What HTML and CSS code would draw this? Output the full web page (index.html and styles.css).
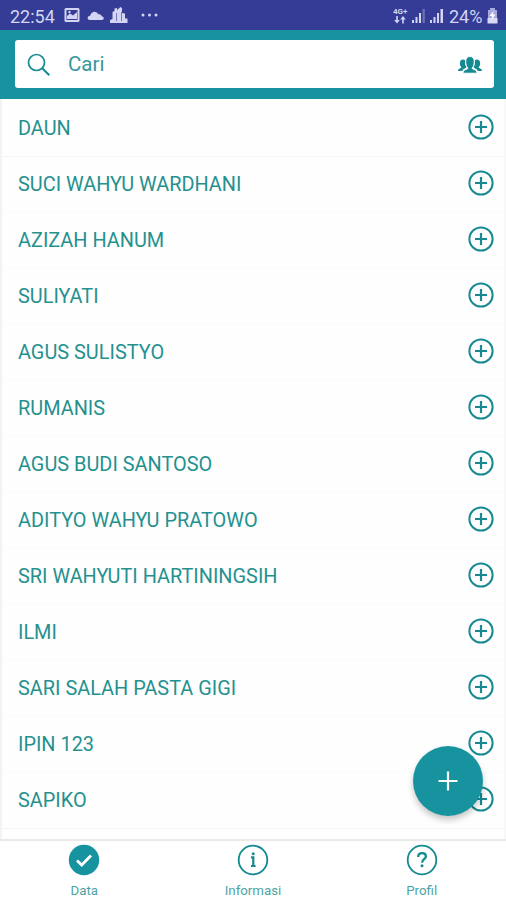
FILE: index.html
```html
<!DOCTYPE html>
<html lang="id">
<head>
    <meta charset="UTF-8">
    <meta name="viewport" content="width=device-width, initial-scale=1.0">
    <title>Data</title>
    <link rel="stylesheet" href="styles.css">
</head>
<body>
    <svg class="defs" width="0" height="0">
        <symbol id="add" viewBox="0 0 26 26">
            <circle cx="13" cy="13" r="11.6" fill="none" stroke="currentColor" stroke-width="2"/>
            <path d="M13 7v12M7 13h12" fill="none" stroke="currentColor" stroke-width="2.2"/>
        </symbol>
    </svg>

    <div class="status-bar">
        <span class="time">22:54</span>
        <svg class="status-left" width="96" height="18" viewBox="0 0 96 18" fill="currentColor">
            <path fill-rule="evenodd" d="M2 2h12q1.500 0 1.500 1.500v11q0 1.500-1.500 1.500h-12q-1.500 0-1.500-1.500v-11q0-1.500 1.500-1.500zM2.500 4v10h11v-10z"/>
            <path d="M3 13v-3l3-2.500 3 2 4-3.500v7z"/>
            <circle cx="5.500" cy="6" r="1.200"/>
            <path d="M26 14q-2.500 0-2.500-2 0-2 2.500-2.300 1-3 3.300-3.700 3.200-1 5.200 2.300 2.700-.3 3.300 2 2 .4 2 2 0 1.700-2 1.700z"/>
            <path d="M46 17v-3l2.500-1v-7l2-1v-2.500l2.500-.5v2l3.500-3 1.500 1v5l3 .5v5h2.500v4.500z"/>
            <path d="M52.500 7v8M57.500 6v9" stroke="#343c96" stroke-width=".6"/>
            <circle cx="79" cy="9" r="1.500"/>
            <circle cx="85.500" cy="9" r="1.500"/>
            <circle cx="92" cy="9" r="1.500"/>
        </svg>
        <div class="status-right">
            <div class="network">
                <span>4G+</span>
                <svg width="12" height="8" viewBox="0 0 12 8" fill="currentColor">
                    <path d="M2.200 0h1.600v4h2l-2.800 3.500-2.800-3.500h2zM8.200 7.500h1.600v-4h2l-2.800-3.500-2.800 3.500h2z"/>
                </svg>
            </div>
            <svg class="signal" width="34" height="16" viewBox="0 0 34 16" fill="currentColor">
                <path d="M0 12h2v3h-2zM3.500 9h2v6h-2zM7 5h2v10h-2z"/>
                <path d="M10.500 1h2.300v14h-2.300z" opacity=".35"/>
                <path d="M18 12h2v3h-2zM21.500 9h2v6h-2zM25 5h2v10h-2zM28.500 1h2.500v14h-2.500z"/>
            </svg>
            <span class="percent">24%</span>
            <svg class="battery" width="11" height="16" viewBox="0 0 11 16">
                <path d="M3 0h5v2h2v8h-9v-8h2z" fill="#a6a9de"/>
                <path d="M.5 10h10v5.500h-10z" fill="#d7d9f5"/>
                <path d="M6.500 3l-4 5h2.500l-.5 4 4-5.500h-2.500z" fill="#fff"/>
            </svg>
        </div>
    </div>

    <header class="header">
        <div class="search">
            <svg class="search-icon" width="24" height="24" viewBox="0 0 24 24" fill="none" stroke="currentColor">
                <circle cx="9.500" cy="9.500" r="8" stroke-width="1.700"/>
                <path d="M15.300 15.300l7 7" stroke-width="2"/>
            </svg>
            <span class="search-text">Cari</span>
            <svg class="people" width="26" height="18" viewBox="0 0 26 18" fill="currentColor">
                <path d="M1 15c0-2.500 2.500-2.500 3.500-3.500-1.500-1.500-1.800-3-1.600-5C3.100 4.500 4.300 3.500 6 3.500c1 0 1.700.3 2.200.9-.4 2.600.2 4.900 1.300 6.600-.5 1.500-3.800 1.700-4.200 4z"/>
                <path d="M25 15c0-2.500-2.500-2.500-3.500-3.500 1.500-1.500 1.800-3 1.600-5-.2-2-1.400-3-3.100-3-1 0-1.700.3-2.200.9.4 2.600-.2 4.900-1.300 6.600.5 1.500 3.800 1.700 4.200 4z"/>
                <path d="M6 17.200c0-4 4-3.200 5-4.900C9.400 10.500 8.800 8.500 8.800 5.500 8.800 2.300 10.300.5 13 .5s4.200 1.800 4.200 5c0 3-.6 5-2.200 6.800 1 1.700 5 .9 5 4.900z" stroke="#fff" stroke-width=".9"/>
            </svg>
        </div>
    </header>

    <main class="list">
        <div class="row"><span>DAUN</span><svg><use href="#add"/></svg></div>
        <div class="row"><span>SUCI WAHYU WARDHANI</span><svg><use href="#add"/></svg></div>
        <div class="row"><span>AZIZAH HANUM</span><svg><use href="#add"/></svg></div>
        <div class="row"><span>SULIYATI</span><svg><use href="#add"/></svg></div>
        <div class="row"><span>AGUS SULISTYO</span><svg><use href="#add"/></svg></div>
        <div class="row"><span>RUMANIS</span><svg><use href="#add"/></svg></div>
        <div class="row"><span>AGUS BUDI SANTOSO</span><svg><use href="#add"/></svg></div>
        <div class="row"><span>ADITYO WAHYU PRATOWO</span><svg><use href="#add"/></svg></div>
        <div class="row"><span>SRI WAHYUTI HARTININGSIH</span><svg><use href="#add"/></svg></div>
        <div class="row"><span>ILMI</span><svg><use href="#add"/></svg></div>
        <div class="row"><span>SARI SALAH PASTA GIGI</span><svg><use href="#add"/></svg></div>
        <div class="row"><span>IPIN 123</span><svg><use href="#add"/></svg></div>
        <div class="row"><span>SAPIKO</span><svg><use href="#add"/></svg></div>
    </main>

    <button class="fab" aria-label="Tambah">
        <svg width="20" height="20" viewBox="0 0 20 20" stroke="currentColor" stroke-width="2.200">
            <path d="M10 .5v19M.5 10h19"/>
        </svg>
    </button>

    <nav class="tabs">
        <div class="tab">
            <svg width="32" height="32" viewBox="0 0 32 32">
                <circle class="disc" cx="16" cy="16" r="15.200"/>
                <path d="M9 16.500l4.700 4.500 9.300-9.500" fill="none" stroke="#fff" stroke-width="2.800"/>
            </svg>
            <span>Data</span>
        </div>
        <div class="tab">
            <svg width="32" height="32" viewBox="0 0 32 32" fill="none" stroke="currentColor">
                <circle cx="16" cy="16" r="14.300" stroke-width="1.800"/>
                <path d="M14 13.300h2.300v8.700M14 22h4.600" stroke-width="2.200"/>
                <circle cx="16.200" cy="9.800" r="1.500" fill="currentColor" stroke="none"/>
            </svg>
            <span>Informasi</span>
        </div>
        <div class="tab">
            <svg width="32" height="32" viewBox="0 0 32 32" fill="none" stroke="currentColor">
                <circle cx="16" cy="16" r="14.300" stroke-width="1.800"/>
                <path d="M12.200 13c0-2.500 1.500-3.800 3.900-3.800 2.300 0 3.800 1.200 3.800 3.200 0 2.700-3.900 3-3.900 6.400" stroke-width="2.300"/>
                <circle cx="16" cy="21.800" r="1.500" fill="currentColor" stroke="none"/>
            </svg>
            <span>Profil</span>
        </div>
    </nav>
</body>
</html>
```
FILE: styles.css
```css
* {
    box-sizing: border-box;
}
body {
    margin: 0;
    height: 900px;
    display: flex;
    flex-direction: column;
    overflow: hidden;
    position: relative;
    background: #fefefe;
    color: #158a91;
    font-family: Roboto, sans-serif;
}
svg {
    display: block;
    flex-shrink: 0;
}
.defs {
    position: absolute;
}
.status-bar {
    height: 30px;
    display: flex;
    align-items: center;
    padding: 2px 8px 0 10px;
    background: #343c96;
    color: #d3d5f3;
}
.time {
    width: 54px;
    font-size: 18px;
}
.status-left {
    margin-top: -2px;
}
.status-right {
    margin-left: auto;
    display: flex;
    align-items: center;
}
.network {
    width: 19px;
    display: flex;
    flex-direction: column;
    font-size: 8px;
    line-height: 8px;
    font-weight: bold;
}
.network svg {
    margin-left: 1px;
}
.percent {
    margin-left: 3px;
    width: 38px;
    font-size: 18px;
}
.header {
    height: 69px;
    padding: 10px 12px 11px 15px;
    background: #1793a0;
}
.search {
    height: 48px;
    display: flex;
    align-items: center;
    padding: 0 11px 0 12px;
    background: #fff;
    border-radius: 3px;
}
.search-icon {
    margin-top: 2px;
}
.search-text {
    margin-left: 17px;
    font-size: 20.5px;
    color: #36979d;
}
.people {
    margin-left: auto;
    margin-top: 2px;
}
.list {
    height: 740px;
    border-left: 2px solid #f3f3f4;
    border-right: 2px solid #f8f8f8;
    padding-top: 2px;
}
.row {
    height: 56px;
    display: flex;
    align-items: center;
    justify-content: space-between;
    padding: 0 10px 0 16px;
    border-bottom: 1px solid #fafafa;
    font-size: 19.9px;
    color: #25918f;
}
.row:first-child,
.row:last-child {
    border-bottom-color: #f5f5f5;
}
.row svg {
    width: 26px;
    height: 26px;
    margin-bottom: 3px;
    color: #158a91;
}
.fab {
    position: absolute;
    left: 413px;
    top: 746px;
    width: 70px;
    height: 70px;
    display: flex;
    align-items: center;
    justify-content: center;
    padding: 0;
    border: none;
    border-radius: 50%;
    background: #1793a0;
    color: #fff;
    box-shadow: 0 4px 6px rgba(0,0,0,0.22);
}
.tabs {
    height: 61px;
    display: flex;
    border-top: 2px solid #e9e9ea;
    background: #fff;
}
.tab {
    flex: 1;
    display: flex;
    flex-direction: column;
    align-items: center;
    padding-top: 3px;
    font-size: 13.3px;
}
.tab span {
    margin-top: 7px;
    color: #4ea4a5;
}
.disc {
    fill: #1793a0;
}
```
